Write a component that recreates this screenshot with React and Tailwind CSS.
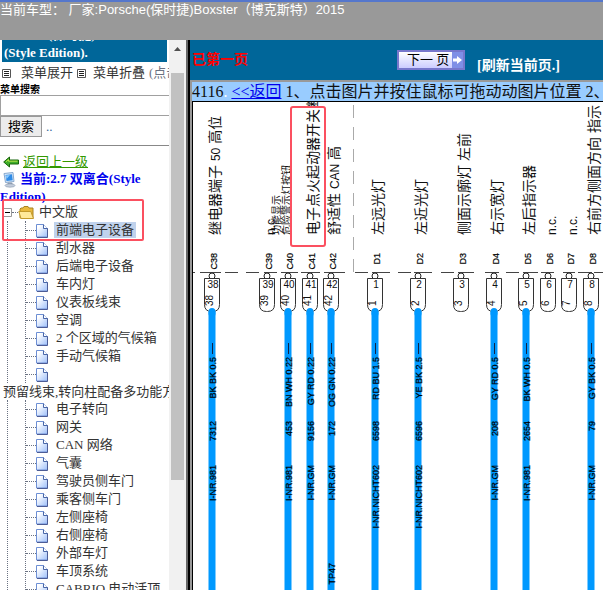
import clsx from 'clsx'

const TREE_TOP = ['前端电子设备', '刮水器', '后端电子设备', '车内灯', '仪表板线束', '空调', '2 个区域的气候箱', '手动气候箱', '']

const TREE_BOTTOM = [
  '电子转向',
  '网关',
  'CAN 网络',
  '气囊',
  '驾驶员侧车门',
  '乘客侧车门',
  '左侧座椅',
  '右侧座椅',
  '外部车灯',
  '车顶系统',
  'CABRIO 电动活顶',
]

const PINS = [
  { x: 19, tag: 'C38', no: '38', label: '继电器端子 50 高位', wire: ['BK BK 0.5', '7312', 'I-NR.981'] },
  { x: 74, tag: 'C39', no: '39', label: 'n.c.' },
  { x: 95, tag: 'C40', no: '40', wire: ['BN WH 0.22', '453', 'I-NR.981'] },
  { x: 117, tag: 'C41', no: '41', label: '电子点火起动器开关断', wire: ['GY RD 0.22', '9156', 'I-NR.GM'] },
  { x: 138, tag: 'C42', no: '42', label: '舒适性 CAN 高', wire: ['OG GN 0.22', '172', 'I-NR.GM'], splice: 'TP47' },
  { x: 182, tag: 'D1', no: '1', label: '左远光灯', wire: ['RD BU 1.5', '6598', 'I-NR.NICHT602'] },
  { x: 225, tag: 'D2', no: '2', label: '左近光灯', wire: ['YE BK 2.5', '6596', 'I-NR.NICHT602'] },
  { x: 268, tag: 'D3', no: '3', label: '侧面示廓灯 左前' },
  { x: 301, tag: 'D4', no: '4', label: '右示宽灯', wire: ['GY RD 0.5', '208', 'I-NR.GM'] },
  { x: 333, tag: 'D5', no: '5', label: '左后指示器', wire: ['BK WH 0.5', '2654', 'I-NR.981'] },
  { x: 355, tag: 'D6', no: '6', label: 'n.c.' },
  { x: 376, tag: 'D7', no: '7', label: 'n.c.' },
  { x: 398, tag: 'D8', no: '8', label: '右前方侧面方向 指示', wire: ['GY BK 0.5', '79', 'I-NR.GM'] },
]

// pieces of the connector outline, [from, to]
const DASHES = [
  [0, 2], [7, 28], [32, 45], [53, 66], [71, 84], [88, 105], [108, 127], [131, 152], [162, 175], [179, 197],
  [205, 218], [221, 239], [248, 261], [265, 281], [292, 306], [313, 326], [330, 345], [348, 361], [370, 382],
  [385, 399], [401, 410],
]

const PageIcon = () => (
  <svg width="13" height="15" viewBox="0 0 13 15" className="shrink-0">
    <defs>
      <linearGradient id="page" x1="0" y1="0" x2="1" y2="1">
        <stop offset="0.2" stopColor="#fff" />
        <stop offset="1" stopColor="#9dbffa" />
      </linearGradient>
    </defs>
    <path d="M.5 1.500h7l4 4v8.500h-11z" fill="url(#page)" stroke="#6d8fd4" />
    <path d="M7.500 1.500v4h4" fill="#fff" stroke="#4866a8" />
    <path d="M11.500 5.500v9h-10.500" fill="none" stroke="#4c5c96" />
  </svg>
)

const FolderIcon = () => (
  <svg width="17" height="15" viewBox="0 0 17 15" className="shrink-0">
    <path d="M2 13V4l1-1h2l1-1.500h4l1 1.500h4v10z" fill="#e9b93c" stroke="#a98322" />
    <path d="M3 13.500L.8 6.500h12l2.700 7z" fill="#ffe99a" stroke="#c39a2c" />
  </svg>
)

const ListIcon = () => (
  <svg width="9" height="9" viewBox="0 0 9 9" className="shrink-0">
    <path d="M.5.500h8v8h-8z" fill="#fff" stroke="#555" />
    <path d="M2 2.500h5M2 4.500h5M2 6.500h5" stroke="#222" />
  </svg>
)

const BackIcon = () => (
  <svg width="16" height="12" viewBox="0 0 16 12" className="shrink-0">
    <path d="M.7 6L6.500 1v3h9v4h-9v3z" fill="#3fae2a" stroke="#17640b" />
    <path d="M3 5.800L5.500 3.500v1.700h9" fill="none" stroke="#b9e04a" />
  </svg>
)

const ComputerIcon = () => (
  <svg width="13" height="16" viewBox="0 0 13 16" className="shrink-0">
    <path d="M1 1.500l9-1 1 9-8.500 1z" fill="#d5e6f8" stroke="#88a9cf" />
    <path d="M2.500 3l6.500-.8.7 6-6.200.8z" fill="#2f8be6" />
    <path d="M3 3.500l4-.5-3.500 4z" fill="#8ccbff" />
    <path d="M5 10.500h4l1 2H4z" fill="#8d9bb0" />
    <ellipse cx="7" cy="13.500" rx="5" ry="1.700" fill="#c3cddc" stroke="#8593a8" strokeWidth=".6" />
  </svg>
)

const TreeRow = ({ text, active }) => (
  <li className="flex h-[18px] items-center">
    <span className="w-[10px] border-t border-dotted border-gray-500" />
    <PageIcon />
    <a href="#" className={clsx('ml-[5px] px-[2px] leading-4', active && 'bg-[#c0d2ec]')}>
      {text}
    </a>
  </li>
)

const Tree = () => (
  <div className="text-[13px] whitespace-nowrap text-[#333]">
    <div className="flex h-[18px] items-center pl-[3px]">
      <svg width="9" height="9" viewBox="0 0 9 9" className="shrink-0">
        <path d="M.5.500h8v8h-8z" fill="#fff" stroke="#999" />
        <path d="M2 4.500h5" stroke="#000" />
      </svg>
      <span className="w-[6px] border-t border-dotted border-gray-500" />
      <FolderIcon />
      <a href="#" className="ml-1">中文版</a>
    </div>
    <div className="ml-[7px] border-l border-dotted border-gray-500 pl-[17px]">
      <ul className="border-l border-dotted border-gray-500">
        {TREE_TOP.map((text, i) => (
          <TreeRow key={i} text={text} active={i === 0} />
        ))}
      </ul>
    </div>
    <p className="h-[17px] pl-[3px] leading-[18px]">预留线束,转向柱配备多功能方</p>
    <div className="ml-[7px] border-l border-dotted border-gray-500 pl-[17px]">
      <ul className="border-l border-dotted border-gray-500">
        {TREE_BOTTOM.map((text) => (
          <TreeRow key={text} text={text} />
        ))}
      </ul>
    </div>
  </div>
)

const Sidebar = () => (
  <aside className="relative w-[169px] shrink-0 overflow-hidden bg-white">
    {/* Title */}
    <div className="mx-[2px] flex h-[22px] flex-col justify-end overflow-hidden bg-[#006699] px-[2px] text-[13px] leading-[18px] font-bold text-white">
      <p>Porsche(保时捷)Boxster</p>
      <p>(Style Edition).</p>
    </div>

    <div className="flex h-[22px] items-center pl-[2px] text-[13px] whitespace-nowrap text-[#333]">
      <ListIcon />
      <button className="ml-[10px]">菜单展开</button>
      <span className="w-1 shrink-0" />
      <ListIcon />
      <button className="ml-[7px]">菜单折叠</button>
      <span className="ml-1 text-gray-500">(点击)</span>
    </div>

    {/* Search */}
    <form onSubmit={(e) => e.preventDefault()}>
      <label htmlFor="menu-search" className="block h-[11px] text-[10px] leading-[11px] font-bold text-black">
        菜单搜索
      </label>
      <input id="menu-search" className="block h-[21px] w-full border border-r-0 border-[#a0a0a0] px-1 text-[13px]" />
      <div className="flex items-center">
        <button className="h-[21px] w-[42px] border border-[#999] bg-[#ececec] text-[13px] leading-4 text-black">搜索</button>
        <span className="ml-1 text-[13px] text-[#336699]">..</span>
      </div>
    </form>
    <hr className="mt-2 border-[#888]" />

    <div className="mt-2 flex h-4 items-center gap-1 pl-[3px] text-[13px]">
      <BackIcon />
      <a href="#" className="text-[#339900] underline">返回上一级</a>
    </div>
    <p className="h-[33px] overflow-hidden text-[13px] leading-[18px] font-bold text-[#0000ee]">
      <span className="ml-[3px] inline-block h-4 w-[17px] align-middle"><ComputerIcon /></span>
      当前:2.7 双离合(Style Edition)
    </p>
    <Tree />

    <div className="absolute top-[159px] left-[2px] h-[42px] w-[142px] rounded-xs border-2 border-[#fb5060]" />
  </aside>
)

const Scrollbar = () => (
  <div className="flex w-[17px] shrink-0 flex-col items-center bg-[#f1f1f1]">
    <svg width="17" height="33" viewBox="0 0 17 33" className="shrink-0">
      <path d="M5 11l3.500-4 3.500 4z" fill="#505050" />
    </svg>
    <div className="h-[74%] w-[13px] bg-[#c1c1c1]" />
  </div>
)

// vertical caption, Latin runs are set smaller than the Chinese ones
const Caption = ({ x, y = 133, size = 14, children }) => (
  <text transform={`translate(${x} ${y}) rotate(-90)`} fontSize={size}>
    {children.split(/([A-Za-z0-9.]+)/).map((part, i) => (
      <tspan key={i} fontSize={i % 2 ? size - 2 : size}>{part}</tspan>
    ))}
  </text>
)

const WireText = ({ x, y, children }) => (
  <text
    transform={`translate(${x} ${y}) rotate(-90)`}
    fontSize="9"
    textAnchor="end"
    fill="#000"
    stroke="#000"
    strokeWidth="0.2"
  >
    {children}
  </text>
)

const Pin = ({ x, tag, no, label, wire, splice }) => (
  <g>
    {wire && <path d={`M${x} 210V2000`} stroke="#0099ff" strokeWidth="7" />}
    {label && <Caption x={x + 8}>{label}</Caption>}
    <WireText x={x + 5} y={151}>{tag}</WireText>
    <circle cx={x} cy="174" r="3" fill="#fff" stroke="#222" />
    <path d={`M${x - 7.5} 176.500h15v26q0 7-7 7h-1q-7 0-7-7z`} fill="#fff" stroke="#333" />
    {wire && <path d={`M${x} 209.500v2`} stroke="#0099ff" strokeWidth="7" strokeLinecap="round" />}
    <text x={x + 1} y="186" fontSize="10" textAnchor="middle">{no}</text>
    <text transform={`translate(${x + 1} 204) rotate(-90)`} fontSize="10">{no}</text>
    {wire && (
      <>
        <path d={`M${x + 0.5} 241v11`} stroke="#124" />
        <WireText x={x + 4} y={255}>{wire[0]}</WireText>
        <WireText x={x + 4} y={319}>{wire[1]}</WireText>
        <WireText x={x + 4} y={363}>{wire[2]}</WireText>
      </>
    )}
    {splice && <WireText x={x + 4} y={461}>{splice}</WireText>}
  </g>
)

const Diagram = () => (
  <svg
    width="100%"
    height="100%"
    className="block font-['Liberation_Sans','Noto_Sans_CJK_SC',sans-serif]"
    fill="#111"
  >
    {DASHES.map(([from, to]) => (
      <path key={from} d={`M${from} 170.500H${to}`} stroke="#444" />
    ))}
    <path d="M160.500 3V170" stroke="#aaa" strokeDasharray="13 9" />
    {PINS.map((pin) => (
      <Pin key={pin.tag} {...pin} />
    ))}
    <Caption x={87} size={10}>功能显示</Caption>
    <Caption x={97} size={10}>危险警示灯按钮</Caption>
    <rect x="98" y="5" width="34" height="139" rx="2" fill="none" stroke="#fb5060" strokeWidth="2" />
  </svg>
)

const Viewer = () => (
  <main className="flex min-w-0 flex-1 flex-col bg-[#999]">
    <div className="flex h-10 shrink-0 items-center bg-[#006699] pl-[2px] text-sm font-bold whitespace-nowrap">
      <span className="text-[#ff0000]">已第一页</span>
      <button className="ml-[149px] flex h-5 w-[68px] items-center justify-between border-2 border-[#7777cc] bg-linear-to-b from-white to-[#ccccff] pl-2 text-[13px] font-normal text-black">
        下一 页
        <svg width="11" height="16" viewBox="0 0 11 16">
          <path d="M0 0h11v16H0z" fill="#7f8fe6" />
          <path d="M1 6.500h4V4l5 4-5 4V9.500H1z" fill="#fff" />
        </svg>
      </button>
      <a href="#" className="mt-3 ml-3 text-white">[刷新当前页.]</a>
    </div>
    <p className="mt-[2px] ml-[2px] h-[19px] shrink-0 overflow-hidden bg-[#99ccff] text-base leading-[19px] whitespace-nowrap text-[#111]">
      4116<span className="text-white">.</span> <a href="#" className="text-[#0000ee] underline">{'<<返回'}</a>{' '}
      1、点击图片并按住鼠标可拖动动图片位置 2、
    </p>
    <div className="ml-[2px] min-h-0 flex-1 overflow-hidden border-t border-l border-black bg-white">
      <Diagram />
    </div>
  </main>
)

const App = () => (
  <div className="flex h-screen flex-col overflow-hidden bg-white font-['Liberation_Serif','Noto_Sans_CJK_SC',serif]">
    <header className="h-10 shrink-0 border-t-2 border-[#5577cc] bg-[#999] font-['Liberation_Sans','Noto_Sans_CJK_SC',sans-serif] text-[13px] leading-4 whitespace-nowrap text-white">
      当前车型： 厂家:Porsche(保时捷)Boxster（博克斯特）2015
    </header>
    <div className="flex min-h-0 flex-1">
      <Sidebar />
      <Scrollbar />
      <div className="w-1 shrink-0 border-l-2 border-[#666] bg-black" />
      <Viewer />
    </div>
  </div>
)

export default App
